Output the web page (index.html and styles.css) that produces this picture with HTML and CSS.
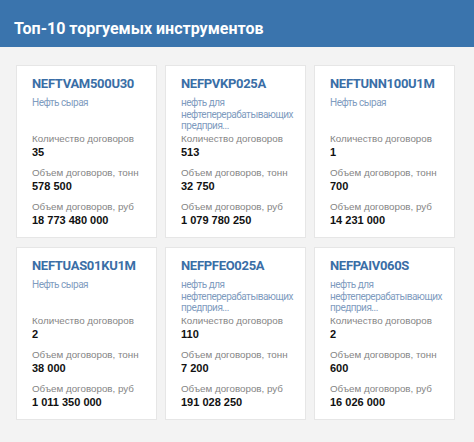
FILE: index.html
```html
<!DOCTYPE html>
<html lang="ru">
<head>
<meta charset="utf-8">
<link rel="stylesheet" href="styles.css">
</head>
<body>
<header class="header"><h1 class="header-title">Топ-10 торгуемых инструментов</h1></header>
<main class="grid">
  <div class="card">
    <div class="card-title">NEFTVAM500U30</div>
    <div class="card-desc">Нефть сырая</div>
    <div class="stat"><div class="stat-label">Количество договоров</div><div class="stat-value">35</div></div>
    <div class="stat"><div class="stat-label">Объем договоров, тонн</div><div class="stat-value">578 500</div></div>
    <div class="stat"><div class="stat-label">Объем договоров, руб</div><div class="stat-value">18 773 480 000</div></div>
  </div>
  <div class="card">
    <div class="card-title">NEFPVKP025A</div>
    <div class="card-desc">нефть для нефтеперерабатывающих предприя...</div>
    <div class="stat"><div class="stat-label">Количество договоров</div><div class="stat-value">513</div></div>
    <div class="stat"><div class="stat-label">Объем договоров, тонн</div><div class="stat-value">32 750</div></div>
    <div class="stat"><div class="stat-label">Объем договоров, руб</div><div class="stat-value">1 079 780 250</div></div>
  </div>
  <div class="card">
    <div class="card-title">NEFTUNN100U1M</div>
    <div class="card-desc">Нефть сырая</div>
    <div class="stat"><div class="stat-label">Количество договоров</div><div class="stat-value">1</div></div>
    <div class="stat"><div class="stat-label">Объем договоров, тонн</div><div class="stat-value">700</div></div>
    <div class="stat"><div class="stat-label">Объем договоров, руб</div><div class="stat-value">14 231 000</div></div>
  </div>
  <div class="card">
    <div class="card-title">NEFTUAS01KU1M</div>
    <div class="card-desc">Нефть сырая</div>
    <div class="stat"><div class="stat-label">Количество договоров</div><div class="stat-value">2</div></div>
    <div class="stat"><div class="stat-label">Объем договоров, тонн</div><div class="stat-value">38 000</div></div>
    <div class="stat"><div class="stat-label">Объем договоров, руб</div><div class="stat-value">1 011 350 000</div></div>
  </div>
  <div class="card">
    <div class="card-title">NEFPFEO025A</div>
    <div class="card-desc">нефть для нефтеперерабатывающих предприя...</div>
    <div class="stat"><div class="stat-label">Количество договоров</div><div class="stat-value">110</div></div>
    <div class="stat"><div class="stat-label">Объем договоров, тонн</div><div class="stat-value">7 200</div></div>
    <div class="stat"><div class="stat-label">Объем договоров, руб</div><div class="stat-value">191 028 250</div></div>
  </div>
  <div class="card">
    <div class="card-title">NEFPAIV060S</div>
    <div class="card-desc">нефть для нефтеперерабатывающих предприя...</div>
    <div class="stat"><div class="stat-label">Количество договоров</div><div class="stat-value">2</div></div>
    <div class="stat"><div class="stat-label">Объем договоров, тонн</div><div class="stat-value">600</div></div>
    <div class="stat"><div class="stat-label">Объем договоров, руб</div><div class="stat-value">16 026 000</div></div>
  </div>
</main>
</body>
</html>
```

FILE: styles.css
```css
* { box-sizing: border-box; }
html, body { margin: 0; padding: 0; }
body {
  width: 474px;
  height: 442px;
  background: #f3f3f3;
  font-family: "Liberation Sans", Arial, sans-serif;
  overflow: hidden;
}
.header {
  height: 47px;
  background: #3a74ad;
  padding: 19px 14px 0;
}
.header-title {
  margin: 0;
  font-family: Roboto, "Noto Sans", sans-serif;
  font-weight: 700;
  font-size: 16px;
  line-height: 20px;
  color: #ffffff;
}
.grid {
  display: grid;
  grid-template-columns: repeat(3, 141px);
  column-gap: 8px;
  row-gap: 9px;
  padding: 18px 19px 0 16px;
}
.card {
  background: #ffffff;
  border: 1px solid #e6e6e6;
  height: 173px;
  padding: 9px 15px 10px;
}
.card-title {
  font-family: Roboto, "Noto Sans", sans-serif;
  font-weight: 700;
  font-size: 13px;
  letter-spacing: -0.3px;
  line-height: 18px;
  color: #3a6ea6;
}
.card-desc {
  margin-top: 4px;
  height: 36px;
  font-family: Roboto, "Noto Sans", sans-serif;
  font-size: 10px;
  letter-spacing: -0.5px;
  line-height: 11.5px;
  color: #7f9cc0;
}
.stat + .stat { margin-top: 8px; }
.stat-label {
  font-size: 9.8px;
  line-height: 12px;
  color: #858585;
}
.stat-value {
  font-weight: 700;
  font-size: 11px;
  line-height: 14px;
  color: #111111;
}
```
